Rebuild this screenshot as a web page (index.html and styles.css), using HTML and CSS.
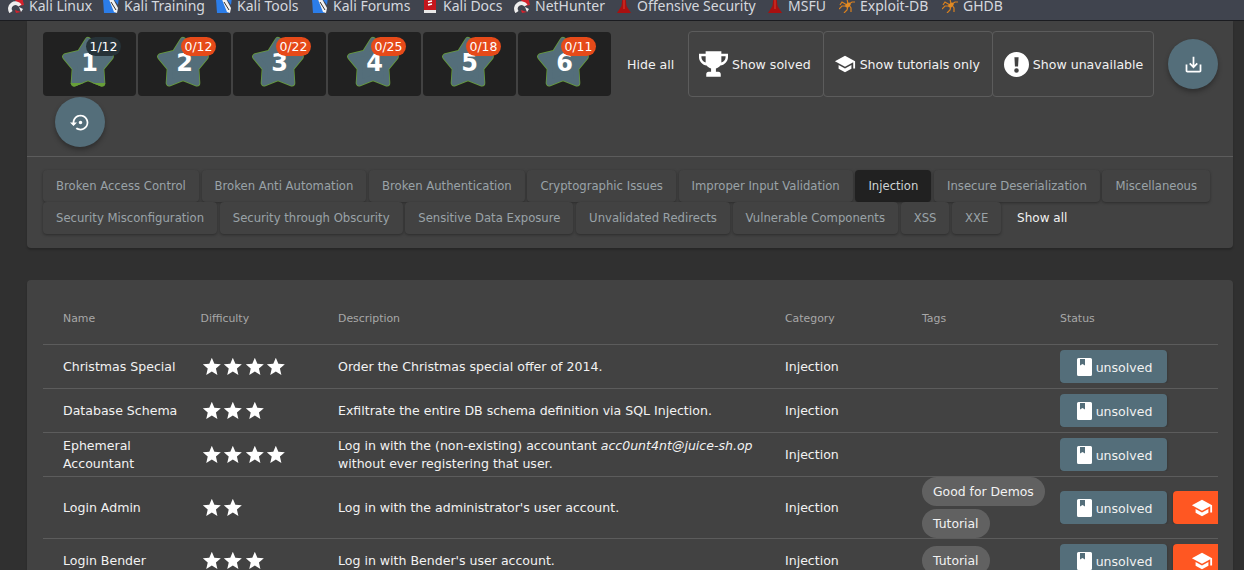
FILE: index.html
```html
<!DOCTYPE html>
<html lang="en">
<head>
  <meta charset="UTF-8" />
  <title>OWASP Juice Shop - Score Board</title>
  <link rel="stylesheet" href="styles.css">
</head>
<body>
  <svg class="defs" width="0" height="0">
    <symbol id="kali" viewBox="0 0 16 16">
      <path d="M7 3 L14 0 L16 8 L11 9z" fill="#d3222c"/>
      <path d="M3 15 A5.500 5.500 0 0 1 12 8.500" fill="none" stroke="#eee" stroke-width="3.800"/>
      <path d="M7 13 L13 15 L8 16z" fill="#d3222c"/>
      <path d="M11 10 L15 12 L13 15z" fill="#eee"/>
    </symbol>
    <symbol id="dragon" viewBox="0 0 16 16">
      <path d="M0 2 L5 0 L13 16 L1 16z" fill="#2b7de9"/>
      <path d="M9 0 L16 0 L15 8z" fill="#2b7de9"/>
      <path d="M5 0 L9 0 L15 11 L14 16 L11 15z" fill="#f2f2f2"/>
      <path d="M8 5 L13 13" stroke="#333" stroke-width="1"/>
    </symbol>
    <symbol id="docs" viewBox="0 0 16 16">
      <rect x="2" y="0" width="12" height="14" fill="#c4161c"/>
      <rect x="2" y="13" width="12" height="3" fill="#e8e8e8"/>
      <path d="M6 5 L10 4 M6 8 L10 7" stroke="#fff" stroke-width="1.400"/>
    </symbol>
    <symbol id="tower" viewBox="0 0 16 16">
      <path d="M6.500 0 L9.500 0 L10.500 9 L15 16 L1 16 L5.500 9z" fill="#a81010"/>
      <path d="M7.500 2 L8.500 2 L8.500 12 L7.500 12z" fill="#e23a2a"/>
    </symbol>
    <symbol id="spider" viewBox="0 0 16 16">
      <g stroke="#d9801e" stroke-width="1.200" fill="none">
        <path d="M8 8 L3 5 L1 8"/>
        <path d="M7 9 L3 9 L0 12"/>
        <path d="M9 7 L8 2 L11 0"/>
        <path d="M10 7 L13 5 L16 5"/>
        <path d="M9 9 L8 13 L5 16"/>
        <path d="M10 8 L12 11 L12 15"/>
      </g>
      <ellipse cx="9" cy="8" rx="3" ry="2" transform="rotate(-40 9 8)" fill="#e08a24"/>
    </symbol>
    <symbol id="star" viewBox="0 0 60 60">
      <polygon fill="#689f38" stroke="#689f38" stroke-width="7" stroke-linejoin="round" points="30,9.500 37.900,22.100 52.300,25.700 42.800,37.200 43.800,52 30,46.500 16.200,52 17.200,37.200 7.700,25.700 22.100,22.100"/>
      <polygon fill="#546e7a" stroke="#546e7a" stroke-width="5.500" stroke-linejoin="round" points="30,9.500 37.900,22.100 52.300,25.700 42.800,37.200 43.800,52 30,46.500 16.200,52 17.200,37.200 7.700,25.700 22.100,22.100"/>
    </symbol>
    <symbol id="star-full" viewBox="0 0 60 60">
      <polygon fill="#689f38" stroke="#689f38" stroke-width="7" stroke-linejoin="round" points="30,9.500 37.900,22.100 52.300,25.700 42.800,37.200 43.800,52 30,46.500 16.200,52 17.200,37.200 7.700,25.700 22.100,22.100"/>
    </symbol>
    <symbol id="star-small" viewBox="0 0 24 24">
      <path d="M12 17.270L18.180 21l-1.640-7.030L22 9.240l-7.190-.61L12 2 9.190 8.630 2 9.240l5.460 4.730L5.820 21z"/>
    </symbol>
    <symbol id="school" viewBox="0 0 24 24">
      <path d="M5 13.180v4L12 21l7-3.820v-4L12 17l-7-3.820zM12 3L1 9l11 6 9-4.910V17h2V9L12 3z"/>
    </symbol>
    <symbol id="book" viewBox="0 0 15 18">
      <path fill-rule="evenodd" d="M1.500 0h12A1.500 1.500 0 0 1 15 1.500v15a1.500 1.500 0 0 1-1.500 1.500h-12A1.500 1.500 0 0 1 0 16.500v-15A1.500 1.500 0 0 1 1.500 0zM3 1v6.500l2.500-1.500 2.500 1.500V1z"/>
    </symbol>
  </svg>

  <nav class="bookmarks">
    <a style="width:95px"><svg><use href="#kali"/></svg>Kali Linux</a>
    <a style="width:113px"><svg><use href="#dragon"/></svg>Kali Training</a>
    <a style="width:96px"><svg><use href="#dragon"/></svg>Kali Tools</a>
    <a style="width:110px"><svg><use href="#dragon"/></svg>Kali Forums</a>
    <a style="width:92px"><svg><use href="#docs"/></svg>Kali Docs</a>
    <a style="width:102px"><svg><use href="#kali"/></svg>NetHunter</a>
    <a style="width:151px"><svg><use href="#tower"/></svg>Offensive Security</a>
    <a style="width:72px"><svg><use href="#tower"/></svg>MSFU</a>
    <a style="width:103px"><svg><use href="#spider"/></svg>Exploit-DB</a>
    <a><svg><use href="#spider"/></svg>GHDB</a>
  </nav>

  <main class="content">
    <section class="card filters">
      <div class="toolbar">
        <div class="levels">
          <button class="level"><svg class="star"><use href="#star"/></svg><svg class="star progress"><use href="#star-full"/></svg><b>1</b><span class="badge dark">1/12</span></button>
          <button class="level"><svg class="star"><use href="#star"/></svg><b>2</b><span class="badge">0/12</span></button>
          <button class="level"><svg class="star"><use href="#star"/></svg><b>3</b><span class="badge">0/22</span></button>
          <button class="level"><svg class="star"><use href="#star"/></svg><b>4</b><span class="badge">0/25</span></button>
          <button class="level"><svg class="star"><use href="#star"/></svg><b>5</b><span class="badge">0/18</span></button>
          <button class="level"><svg class="star"><use href="#star"/></svg><b>6</b><span class="badge">0/11</span></button>
        </div>
        <span class="hide-all">Hide all</span>
        <div class="toggles">
          <button class="toggle"><svg class="trophy" viewBox="0 0 24 21"><path fill-rule="evenodd" d="M5.500 0H18.500V2H24V5C24 8.500 21 11.500 17.700 11.800C16.800 13 15.500 13.800 14 14.200V17H16C17.300 17 18 17.800 18 19V21H6V19C6 17.800 6.700 17 8 17H10V14.200C8.500 13.800 7.200 13 6.300 11.800C3 11.500 0 8.500 0 5V2H5.500ZM18.500 4V9.300C20.500 8.700 22 7 22 5V4ZM5.500 4H2V5C2 7 3.500 8.700 5.500 9.300Z"/></svg>Show solved</button>
          <button class="toggle"><svg class="cap"><use href="#school"/></svg>Show tutorials only</button>
          <button class="toggle"><svg class="warn" viewBox="0 0 24 24"><path fill-rule="evenodd" d="M12 0a12 12 0 1 1 0 24a12 12 0 0 1 0-24zM10 5l.5 9h3l.5-9zM12 15.500a2.200 2.200 0 1 0 0 4.400a2.200 2.200 0 0 0 0-4.400z"/></svg>Show unavailable</button>
        </div>
        <button class="fab download"><svg viewBox="0 0 24 24"><path d="M19 12v7H5v-7H3v7c0 1.100.9 2 2 2h14c1.100 0 2-.9 2-2v-7h-2zm-6 .67l2.590-2.580L17 11.500l-5 5-5-5 1.410-1.410L11 12.670V3h2z"/></svg></button>
        <button class="fab reset"><svg viewBox="0 0 24 24"><path d="M14 12c0-1.100-.9-2-2-2s-2 .9-2 2 .9 2 2 2 2-.9 2-2zm-2-9c-4.970 0-9 4.030-9 9H0l4 4 4-4H5c0-3.870 3.130-7 7-7s7 3.130 7 7-3.130 7-7 7c-1.510 0-2.910-.49-4.060-1.300l-1.420 1.440C8.040 20.300 9.940 21 12 21c4.970 0 9-4.030 9-9s-4.030-9-9-9z"/></svg></button>
      </div>
      <div class="categories">
        <span class="chip">Broken Access Control</span>
        <span class="chip">Broken Anti Automation</span>
        <span class="chip">Broken Authentication</span>
        <span class="chip">Cryptographic Issues</span>
        <span class="chip">Improper Input Validation</span>
        <span class="chip active">Injection</span>
        <span class="chip">Insecure Deserialization</span>
        <span class="chip">Miscellaneous</span>
        <span class="chip">Security Misconfiguration</span>
        <span class="chip">Security through Obscurity</span>
        <span class="chip">Sensitive Data Exposure</span>
        <span class="chip">Unvalidated Redirects</span>
        <span class="chip">Vulnerable Components</span>
        <span class="chip">XSS</span>
        <span class="chip">XXE</span>
        <span class="show-all">Show all</span>
      </div>
    </section>

    <section class="card challenges">
      <div class="row head">
        <div>Name</div><div>Difficulty</div><div>Description</div><div>Category</div><div>Tags</div><div>Status</div>
      </div>
      <div class="row">
        <div>Christmas Special</div>
        <div class="stars"><svg><use href="#star-small"/></svg><svg><use href="#star-small"/></svg><svg><use href="#star-small"/></svg><svg><use href="#star-small"/></svg></div>
        <div>Order the Christmas special offer of 2014.</div>
        <div>Injection</div>
        <div></div>
        <div class="status"><button class="unsolved"><svg><use href="#book"/></svg>unsolved</button></div>
      </div>
      <div class="row">
        <div>Database Schema</div>
        <div class="stars"><svg><use href="#star-small"/></svg><svg><use href="#star-small"/></svg><svg><use href="#star-small"/></svg></div>
        <div>Exfiltrate the entire DB schema definition via SQL Injection.</div>
        <div>Injection</div>
        <div></div>
        <div class="status"><button class="unsolved"><svg><use href="#book"/></svg>unsolved</button></div>
      </div>
      <div class="row">
        <div>Ephemeral Accountant</div>
        <div class="stars"><svg><use href="#star-small"/></svg><svg><use href="#star-small"/></svg><svg><use href="#star-small"/></svg><svg><use href="#star-small"/></svg></div>
        <div>Log in with the (non-existing) accountant <em>acc0unt4nt@juice-sh.op</em> without ever registering that user.</div>
        <div>Injection</div>
        <div></div>
        <div class="status"><button class="unsolved"><svg><use href="#book"/></svg>unsolved</button></div>
      </div>
      <div class="row">
        <div>Login Admin</div>
        <div class="stars"><svg><use href="#star-small"/></svg><svg><use href="#star-small"/></svg></div>
        <div>Log in with the administrator's user account.</div>
        <div>Injection</div>
        <div class="tags"><span class="tag">Good for Demos</span><span class="tag">Tutorial</span></div>
        <div class="status"><button class="unsolved"><svg><use href="#book"/></svg>unsolved</button><button class="tutorial"><svg><use href="#school"/></svg></button></div>
      </div>
      <div class="row">
        <div>Login Bender</div>
        <div class="stars"><svg><use href="#star-small"/></svg><svg><use href="#star-small"/></svg><svg><use href="#star-small"/></svg></div>
        <div>Log in with Bender's user account.</div>
        <div>Injection</div>
        <div class="tags"><span class="tag">Tutorial</span></div>
        <div class="status"><button class="unsolved"><svg><use href="#book"/></svg>unsolved</button><button class="tutorial"><svg><use href="#school"/></svg></button></div>
      </div>
    </section>
  </main>
</body>
</html>
```

FILE: styles.css
```css
html, body {
  height: 570px;
  margin: 0;
  overflow: hidden;
}
body {
  font-family: "DejaVu Sans", sans-serif;
  font-size: 12.55px;
  color: #f2f2f2;
  background-color: #303030;
}
button {
  font: inherit;
  color: inherit;
  border: none;
  padding: 0;
}
.defs {
  position: absolute;
}

/* bookmarks bar */
.bookmarks {
  display: flex;
  height: 20px;
  padding-left: 8px;
  overflow: hidden;
  background-color: #40444e;
  border-bottom: 1px solid #1b1c20;
  font-family: "Noto Sans", sans-serif;
  font-size: 14px;
  line-height: 12px;
  color: #d5d8de;
}
.bookmarks a {
  display: flex;
  flex-shrink: 0;
  gap: 5px;
  white-space: nowrap;
}
.bookmarks svg {
  width: 16px;
  height: 16px;
  margin-top: -3px;
}

.content {
  padding: 0 11px 0 27px;
}
.card {
  background-color: #424242;
  border-radius: 0 0 4px 4px;
  box-shadow: 0 2px 2px rgba(0, 0, 0, 0.2);
}

/* level + toggle toolbar */
.toolbar {
  display: flex;
  flex-wrap: wrap;
  align-items: flex-start;
  align-content: flex-start;
  box-sizing: border-box;
  height: 136px;
  padding: 10px 13px 0 16px;
  border-bottom: 1px solid #5c5c5c;
}
.levels {
  display: flex;
  gap: 2px;
  margin-top: 1px;
}
.level {
  position: relative;
  width: 93px;
  height: 64px;
  background-color: #212121;
  border-radius: 4px;
}
.level .star {
  position: absolute;
  left: 15px;
  top: -1px;
  width: 60px;
  height: 60px;
}
.level .progress {
  clip-path: inset(52px 0 0 0);
}
.level b {
  position: absolute;
  left: 0;
  right: 0;
  top: 16px;
  font-size: 24px;
  line-height: 30px;
  color: #fff;
}
.badge {
  position: absolute;
  left: 43px;
  top: 5px;
  width: 35px;
  height: 19px;
  border-radius: 10px;
  background-color: #e64a19;
  font-size: 12.5px;
  line-height: 19px;
  text-align: center;
  color: #fff;
}
.badge.dark {
  background-color: #263238;
}
.hide-all {
  width: 61px;
  margin-left: 16px;
  line-height: 68px;
}
.toggles {
  display: flex;
}
.toggle {
  display: flex;
  align-items: center;
  height: 66px;
  padding: 0 12px 0 10px;
  gap: 4px;
  background: none;
  border: 1px solid #5c5c5c;
  border-radius: 4px;
  margin-right: -1px;
  white-space: nowrap;
}
.toggle:last-child {
  padding: 0 10px 0 11px;
}
.toggle svg {
  fill: #fff;
}
.trophy {
  width: 29px;
  height: 26px;
}
.cap {
  width: 22px;
  height: 22px;
}
.warn {
  width: 25px;
  height: 25px;
}
.fab {
  display: flex;
  align-items: center;
  justify-content: center;
  width: 50px;
  height: 50px;
  border-radius: 50%;
  background-color: #546e7a;
  box-shadow: 0 3px 5px rgba(0, 0, 0, 0.3);
}
.fab svg {
  width: 21px;
  height: 21px;
  fill: #fff;
}
.download {
  margin: 8px 0 0 15px;
}
.reset {
  margin: -2px 0 0 12px;
}

/* category chips */
.categories {
  display: flex;
  flex-wrap: wrap;
  align-items: center;
  column-gap: 2.7px;
  padding: 13px 16px 14px;
}
.chip {
  height: 32px;
  padding: 0 13px;
  font-size: 11.65px;
  line-height: 32px;
  color: #9aa3a8;
  background-color: #424242;
  border-radius: 4px;
  box-shadow: 0 1px 3px rgba(0, 0, 0, 0.35);
}
.chip.active {
  background-color: #212121;
  color: #cfd4d6;
}
.show-all {
  margin-left: 13px;
  font-size: 12px;
}

/* challenge table */
.challenges {
  margin-top: 32px;
  padding: 0 15px 0 16px;
  border-radius: 4px 4px 0 0;
}
.row {
  display: grid;
  grid-template-columns: 157.5px 137.5px 447px 137px 138px 1fr;
  align-items: center;
  min-height: 43px;
  border-bottom: 1px solid #5c5c5c;
  line-height: 18px;
}
.row > div:first-child {
  padding-left: 20px;
}
.row > div {
  padding-right: 14px;
}
.row.head {
  box-sizing: content-box;
  height: 50px;
  padding-top: 14px;
  font-size: 10.9px;
  color: #a8a8a8;
}
.stars {
  display: flex;
}
.stars svg {
  width: 21.67px;
  height: 21.67px;
  fill: #fff;
}
.tags {
  display: flex;
  flex-direction: column;
  align-items: flex-start;
  gap: 3px;
}
.tag {
  height: 29px;
  padding: 0 11px;
  border-radius: 15px;
  background-color: #616161;
  font-size: 12.4px;
  line-height: 29px;
  white-space: nowrap;
}
.row > .status {
  display: flex;
  gap: 6px;
  padding-right: 0;
  overflow: hidden;
}
.status button {
  display: flex;
  align-items: center;
  justify-content: center;
  flex-shrink: 0;
  height: 33px;
  border-radius: 4px;
  box-shadow: 0 1px 3px rgba(0, 0, 0, 0.3);
}
.status .unsolved {
  width: 107px;
  gap: 4px;
  padding: 2px 0 0 2px;
  background-color: #546e7a;
}
.unsolved svg {
  width: 15px;
  height: 18px;
  margin-top: -2px;
  fill: #fff;
}
.tutorial {
  width: 58px;
  background-color: #ff5722;
}
.tutorial svg {
  width: 22px;
  height: 22px;
  fill: #fff;
}
```
